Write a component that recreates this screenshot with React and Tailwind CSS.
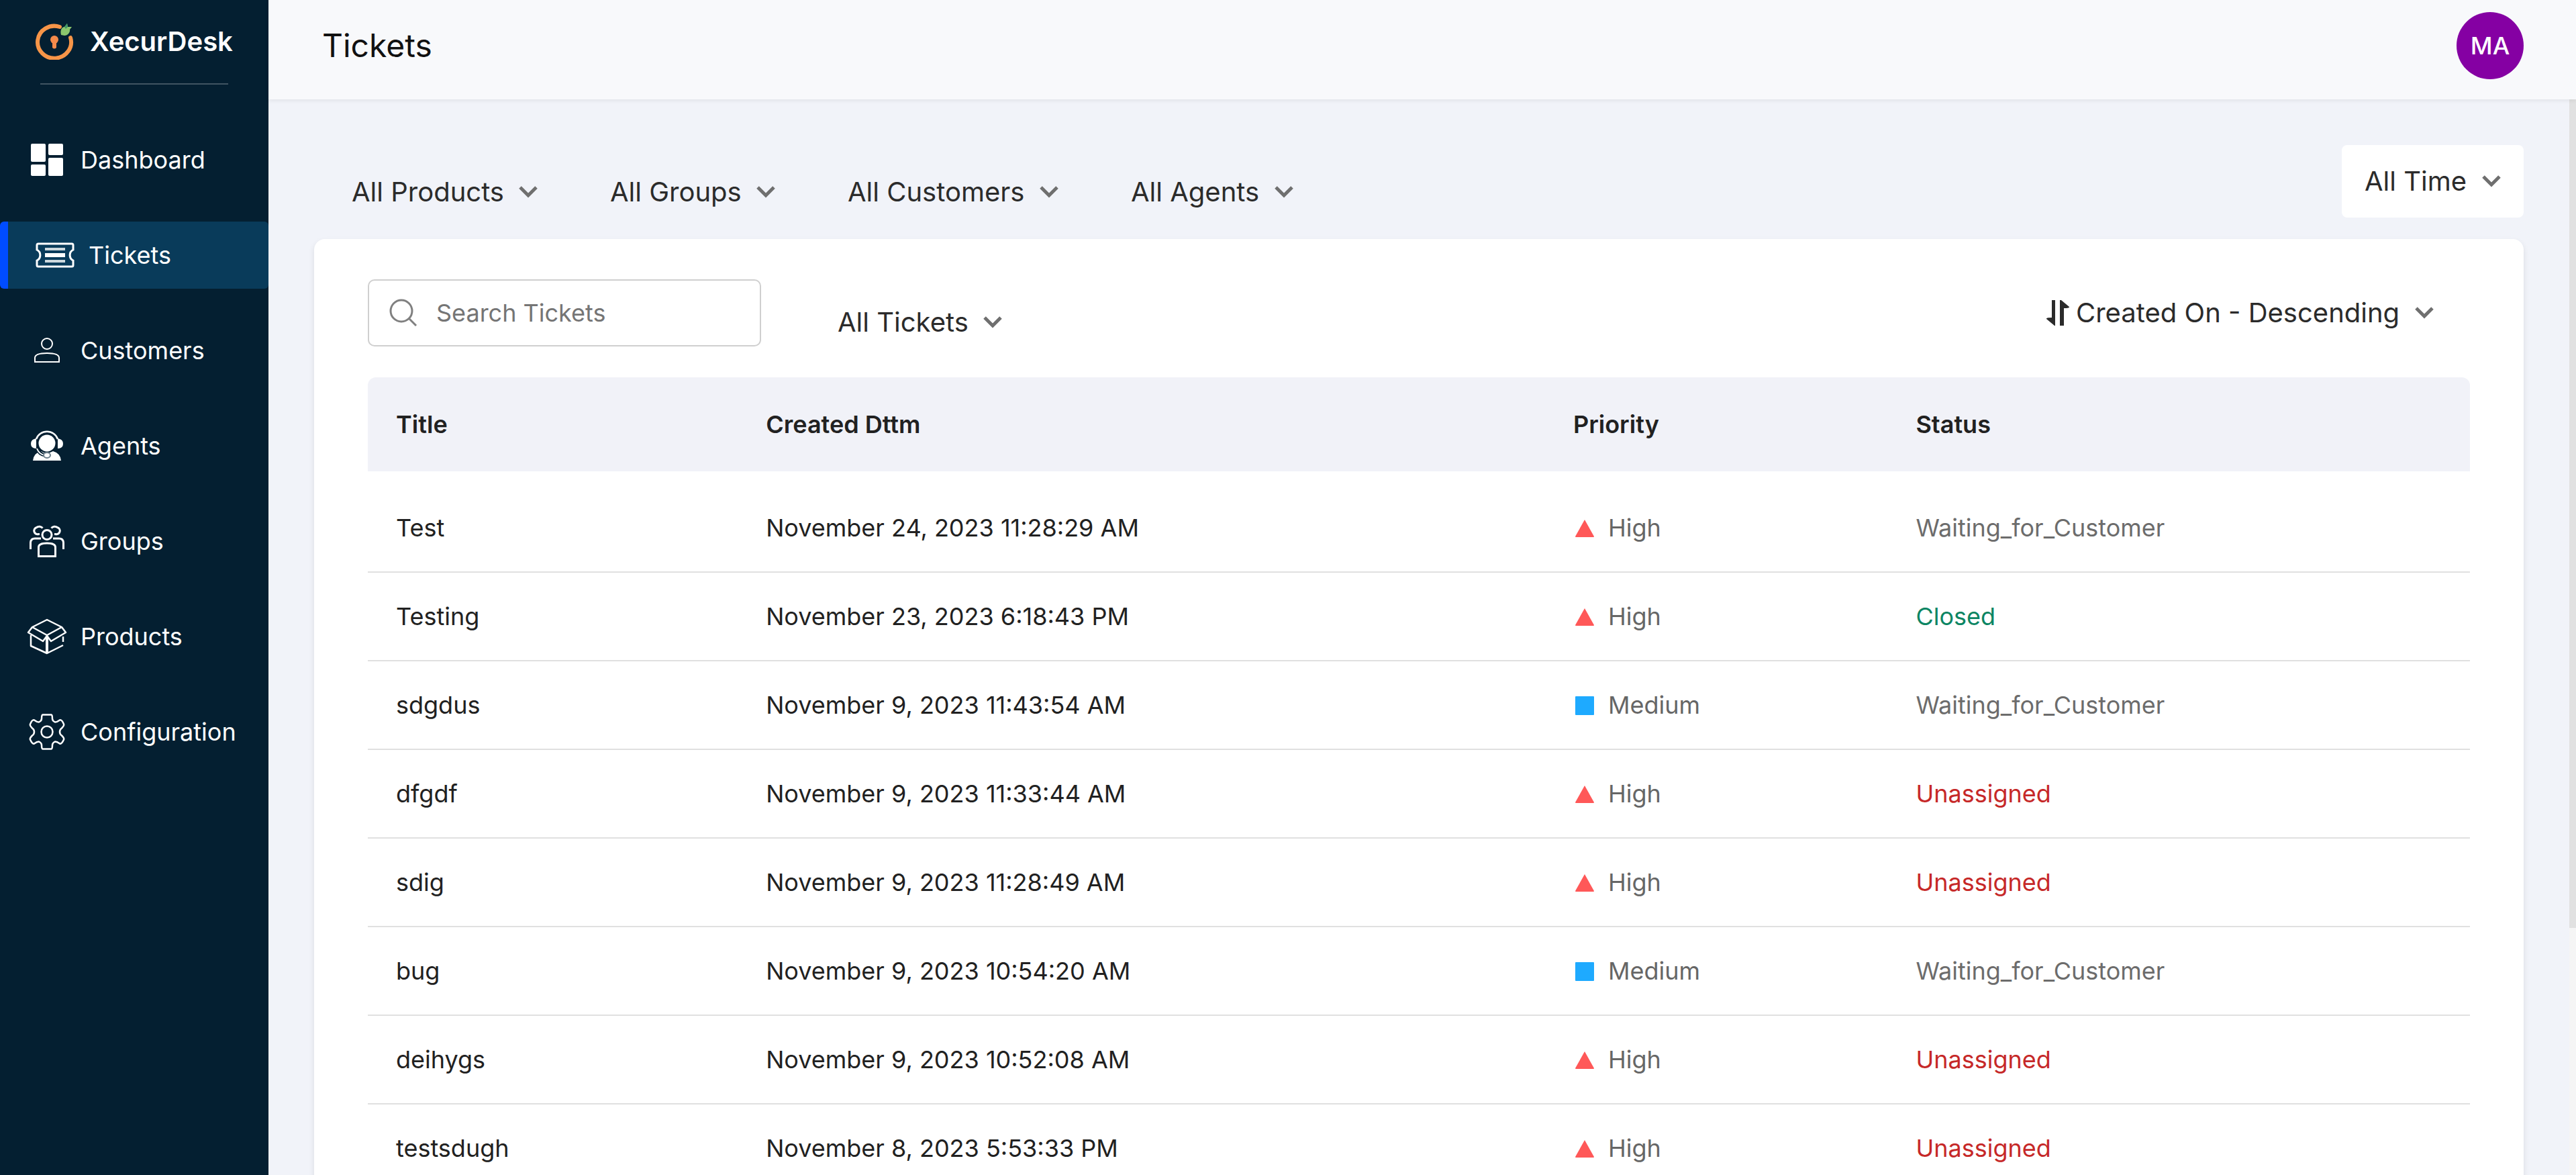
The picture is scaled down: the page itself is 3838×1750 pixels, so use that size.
const SIDEBAR = [
  { label: 'Dashboard', Icon: DashboardIcon },
  { label: 'Tickets', Icon: TicketIcon, active: true },
  { label: 'Customers', Icon: CustomerIcon },
  { label: 'Agents', Icon: AgentIcon },
  { label: 'Groups', Icon: GroupIcon },
  { label: 'Products', Icon: ProductIcon },
  { label: 'Configuration', Icon: GearIcon },
];

const TICKETS = [
  ['Test', 'November 24, 2023 11:28:29 AM', 'High', 'Waiting_for_Customer'],
  ['Testing', 'November 23, 2023 6:18:43 PM', 'High', 'Closed'],
  ['sdgdus', 'November 9, 2023 11:43:54 AM', 'Medium', 'Waiting_for_Customer'],
  ['dfgdf', 'November 9, 2023 11:33:44 AM', 'High', 'Unassigned'],
  ['sdig', 'November 9, 2023 11:28:49 AM', 'High', 'Unassigned'],
  ['bug', 'November 9, 2023 10:54:20 AM', 'Medium', 'Waiting_for_Customer'],
  ['deihygs', 'November 9, 2023 10:52:08 AM', 'High', 'Unassigned'],
  ['testsdugh', 'November 8, 2023 5:53:33 PM', 'High', 'Unassigned'],
];

const STATUS_COLORS = {
  Waiting_for_Customer: 'text-[#6c6c6c]',
  Closed: 'text-[#0b8563]',
  Unassigned: 'text-[#c62828]',
};

function Logo() {
  return (
    <svg className="h-[54px] w-[58px] shrink-0" viewBox="0 0 58 54" fill="none" aria-hidden="true">
      <path d="M37 5A25 24 0 1 0 53 21" stroke="#f79548" strokeWidth="6" strokeLinecap="round" />
      <circle cx="29" cy="24" r="6" fill="#f58a4b" />
      <path d="M26 26h6v10q-3 3-6 0z" fill="#f58a4b" />
      <path d="M39 17c-2-8 2-12 5-12l4-5 1 5 6 0-3 4c1 4-3 9-8 9z" fill="#8cc66d" />
      <path d="M44 5l4-5 1 5-3 3z" fill="#3f9468" />
    </svg>
  );
}

function DashboardIcon() {
  return (
    <svg className="h-12 w-12" viewBox="0 0 48 48" fill="#fff" aria-hidden="true">
      <rect x="0" y="0" width="22" height="27" rx="2" />
      <rect x="26" y="0" width="22" height="17" rx="2" />
      <rect x="0" y="31" width="22" height="17" rx="2" />
      <rect x="26" y="21" width="22" height="27" rx="2" />
    </svg>
  );
}

function TicketIcon() {
  return (
    <svg className="h-[38px] w-[58px]" viewBox="0 0 58 38" fill="none" stroke="#fff" strokeWidth="3" aria-hidden="true">
      <path d="M4 2h50a2 2 0 0 1 2 2v7a9 9 0 0 0 0 16v7a2 2 0 0 1-2 2H4a2 2 0 0 1-2-2v-7a9 9 0 0 0 0-16V4a2 2 0 0 1 2-2z" />
      <path d="M14 10h30M14 28h30" stroke="#cdd8de" strokeWidth="4" />
      <path d="M14 19h30" strokeWidth="6" />
    </svg>
  );
}

function CustomerIcon() {
  return (
    <svg className="h-[38px] w-[38px]" viewBox="0 0 38 38" fill="none" stroke="#fff" strokeWidth="2" aria-hidden="true">
      <circle cx="19" cy="9" r="8" />
      <path d="M1 36v-6q0-7 18-7t18 7v6z" />
    </svg>
  );
}

function AgentIcon() {
  return (
    <svg className="h-[46px] w-12" viewBox="0 0 48 46" fill="none" aria-hidden="true">
      <path d="M8 13a17 17 0 0 1 32 0" stroke="#fff" strokeWidth="2.5" />
      <path d="M8 12v15q-8 0-8-7t8-8zM40 12v15q8 0 8-7t-8-8z" fill="#fff" />
      <circle cx="24" cy="19" r="12.5" fill="#fff" />
      <path d="M3 45q1-11 12-14 9 5 18 0 11 3 12 14z" fill="#fff" />
      <path d="M9 27q3 8 12 10" stroke="#041f31" strokeWidth="5" />
      <path d="M9 27q3 8 11 10" stroke="#fff" strokeWidth="2" />
      <ellipse cx="24" cy="37" rx="5" ry="4" fill="#fff" stroke="#6b7e8a" strokeWidth="2" />
    </svg>
  );
}

function GroupIcon() {
  return (
    <svg className="h-12 w-[52px]" viewBox="0 0 52 48" fill="none" stroke="#fff" strokeWidth="3" aria-hidden="true">
      <circle cx="26" cy="14.500" r="7" />
      <path d="M13.500 46.500V33q0-6 12.500-6t12.500 6v13.500z" />
      <path d="M15 13.500h-1.500a5 5 0 0 1-3-10 6.500 6.500 0 0 1 9 1M37 13.500h1.500a5 5 0 0 0 3-10 6.500 6.500 0 0 0-9 1" />
      <path d="M17 20h-9q-6 0-6.500 6v10M35 20h9q6 0 6.500 6v10" />
    </svg>
  );
}

function ProductIcon() {
  return (
    <svg className="h-[54px] w-[60px]" viewBox="0 0 60 54" fill="none" stroke="#fff" strokeWidth="2.500" strokeLinejoin="round" aria-hidden="true">
      <path d="M30 2 52 13l6 8-22 13-6-8-6 8L2 21l6-8z" />
      <path d="M8 13l22 12 22-12" />
      <path d="M6 25v16l24 11 24-12M54 27v8" />
      <path d="M30 26v26" strokeWidth="4" />
    </svg>
  );
}

function GearIcon() {
  return (
    <svg className="h-[54px] w-[54px]" viewBox="0 0 54 54" fill="none" stroke="#fff" strokeWidth="2.500" strokeLinejoin="round" aria-hidden="true">
      <path d="M20.500 1.500h13q1.500 0 1.500 6 0 3 4 5 3 0 7-3 3-1 6 6 1 2-3 6-3 2-3 5.500t3 5.500q4 4 3 6-3 7-6 6-4-3-7-3-4 2-4 5 0 6-1.500 6h-13q-1.500 0-1.500-6 0-3-4-5-3 0-7 3-3 1-6-6-1-2 3-6 3-2 3-5.500t-3-5.500q-4-4-3-6 3-7 6-6 4 3 7 3 4-2 4-5 0-6 1.500-6z" />
      <circle cx="27" cy="27" r="8.500" />
    </svg>
  );
}

function SearchIcon() {
  return (
    <svg className="h-[42px] w-[42px] shrink-0" viewBox="0 0 42 42" fill="none" stroke="#808080" strokeWidth="3" aria-hidden="true">
      <circle cx="18" cy="18" r="16" />
      <path d="M29 29 40 40" />
    </svg>
  );
}

function SortIcon() {
  return (
    <svg className="h-[38px] w-[34px] shrink-0" viewBox="0 0 34 38" fill="#2b2b2b" aria-hidden="true">
      <path d="M8 0h5v38h-1L0 28q-1-2 8-2zM20 38V0h2l12 10q1 2-8 2v26z" />
    </svg>
  );
}

function Chevron() {
  return (
    <svg className="pointer-events-none h-[18px] w-7 shrink-0" viewBox="0 0 28 18" fill="none" stroke="#6f6f6f" strokeWidth="5" aria-hidden="true">
      <path d="M2 2l12 12L26 2" />
    </svg>
  );
}

function Picker({ name, value }) {
  return (
    <label className="flex items-center gap-[22px]">
      <select aria-label={name} defaultValue={value} className="cursor-pointer appearance-none bg-transparent text-[40px] leading-[56px] text-[#2b2b2b]">
        <option>{value}</option>
      </select>
      <Chevron />
    </label>
  );
}

function Priority({ level }) {
  return (
    <span className="flex items-center gap-5">
      {level === 'High' ? (
        <svg className="ml-1 h-[30px] w-[30px]" viewBox="0 0 30 30" fill="#ff5858" aria-hidden="true">
          <path d="M15 3 29 28a1 1 0 0 1-1 1H2a1 1 0 0 1-1-1z" />
        </svg>
      ) : (
        <svg className="ml-1 h-[30px] w-[30px]" viewBox="0 0 30 30" fill="#1eaaff" aria-hidden="true">
          <rect x="1" y="2" width="28" height="28" rx="1" />
        </svg>
      )}
      {level}
    </span>
  );
}

export default function App() {
  return (
    <div className="flex h-screen overflow-hidden bg-[#f1f3f9] font-['Inter',sans-serif] text-4xl text-[#212121]">
      <aside className="flex w-[400px] shrink-0 flex-col bg-[#041f31] text-white">
        <div className="mx-[52px] flex h-[124px] items-center gap-6">
          <Logo />
          <span className="text-[40px] font-semibold">XecurDesk</span>
        </div>
        <hr className="mx-[60px] border-t-2 border-[#405462]" />
        <nav className="mt-5 flex flex-col">
          {SIDEBAR.map(({ label, Icon, active }) => (
            <a
              key={label}
              href={`#${label.toLowerCase()}`}
              aria-current={active ? 'page' : undefined}
              className={
                active
                  ? 'mt-[42px] flex h-[100px] items-center rounded-md border-l-12 border-[#004cff] bg-[#093b5a] pl-7'
                  : 'mt-[42px] flex h-[100px] items-center pl-7'
              }
            >
              <span className="mr-2 flex w-[84px] items-center justify-center">
                <Icon />
              </span>
              {label}
            </a>
          ))}
        </nav>
      </aside>

      <div className="flex min-w-0 flex-1 flex-col">
        <header className="z-10 flex h-[148px] shrink-0 items-start justify-between bg-[#f8f9fb] pt-[18px] pr-[78px] pl-20 shadow-[0_2px_6px_rgba(0,0,0,0.07)]">
          <h1 className="text-5xl leading-[100px] text-[#111]">Tickets</h1>
          <button type="button" className="size-[100px] rounded-full bg-[#8500a3] font-medium text-white">
            MA
          </button>
        </header>

        <div className="flex min-h-0 flex-1">
          <main className="min-w-0 flex-1 overflow-hidden pr-[68px] pl-[68px]">
            <div className="flex items-end justify-between pt-[68px] pb-8">
              <div className="flex h-[76px] items-center gap-[108px] pl-14">
                <Picker name="Product" value="All Products" />
                <Picker name="Group" value="All Groups" />
                <Picker name="Customer" value="All Customers" />
                <Picker name="Agent" value="All Agents" />
              </div>
              <div className="flex h-[108px] items-center rounded-lg bg-white px-[34px]">
                <Picker name="Time range" value="All Time" />
              </div>
            </div>

            <section className="rounded-2xl bg-white px-20 pt-[60px] shadow-[0_4px_8px_rgba(0,0,0,0.1)]">
              <div className="flex items-center">
                <label className="flex h-[100px] w-[586px] items-center gap-7 rounded-[10px] border-2 border-[#cfcfcf] px-[30px]">
                  <SearchIcon />
                  <input
                    type="search"
                    aria-label="Search Tickets"
                    placeholder="Search Tickets"
                    className="w-full min-w-0 bg-transparent outline-none placeholder:text-[#757575]"
                  />
                </label>
                <div className="ml-[114px] pt-7">
                  <Picker name="Ticket filter" value="All Tickets" />
                </div>
                <div className="mr-[54px] ml-auto flex items-center gap-2.5">
                  <SortIcon />
                  <Picker name="Sort order" value="Created On - Descending" />
                </div>
              </div>

              <table className="mt-[46px] w-full table-fixed text-left">
                <thead>
                  <tr className="h-[140px]">
                    <th className="w-[17.6%] rounded-tl-xl bg-[#f1f2f8] px-[42px] font-semibold">Title</th>
                    <th className="w-[38.4%] bg-[#f1f2f8] px-[42px] font-semibold">Created Dttm</th>
                    <th className="w-[16.3%] bg-[#f1f2f8] px-[42px] font-semibold">Priority</th>
                    <th className="rounded-tr-xl bg-[#f1f2f8] px-[42px] font-semibold">Status</th>
                  </tr>
                </thead>
                <tbody className="before:block before:h-[18px]">
                  {TICKETS.map(([title, created, priority, status]) => (
                    <tr key={title} className="h-[132px] border-b-2 border-[#e0e0e0]">
                      <td className="px-[42px]">{title}</td>
                      <td className="px-[42px]">{created}</td>
                      <td className="px-10 text-[#666]">
                        <Priority level={priority} />
                      </td>
                      <td className={`px-[42px] ${STATUS_COLORS[status]}`}>{status}</td>
                    </tr>
                  ))}
                </tbody>
              </table>
            </section>
          </main>
          <div className="w-[10px] shrink-0 bg-[#f5f5f5]" aria-hidden="true">
            <div className="h-[77%] bg-[#e1e1e1]" />
          </div>
        </div>
      </div>
    </div>
  );
}
